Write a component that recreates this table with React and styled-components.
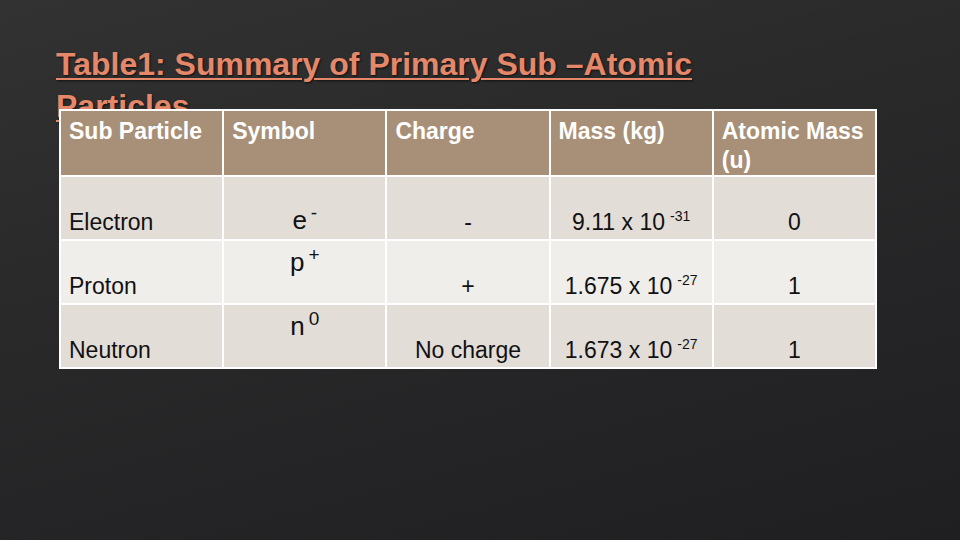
import React from "react";
import styled, { createGlobalStyle } from "styled-components";

const GlobalStyle = createGlobalStyle`
  html, body {
    margin: 0;
    padding: 0;
  }
  body {
    font-family: "Liberation Sans", Arial, sans-serif;
  }
`;

const Slide = styled.div`
  width: 960px;
  height: 540px;
  overflow: hidden;
  box-sizing: border-box;
  padding: 43px 0 0 56px;
  background-color: #262627;
  background-image: linear-gradient(
    165deg,
    #323232 0%,
    #2a2a2b 35%,
    #1f1f21 100%
  );
`;

const Title = styled.h1`
  margin: 0;
  width: 660px;
  font-size: 32px;
  line-height: 42px;
  font-weight: 700;
  color: #e5886a;
  text-decoration: underline;
  text-decoration-thickness: 2px;
  text-underline-offset: 3px;
  text-shadow: 1px 1px 2px rgba(0, 0, 0, 0.7);
`;

const Table = styled.table`
  position: relative;
  margin: -18px 0 0 3px;
  width: 818px;
  table-layout: fixed;
  border-collapse: collapse;
  border: 2px solid #ffffff;
  font-size: 23px;
  color: #111111;
`;

const HeadRow = styled.tr`
  height: 65px;
  background: #a88f78;
`;

const HeadCell = styled.th`
  border: 2px solid #ffffff;
  padding: 6px 8px 0 8px;
  text-align: left;
  vertical-align: top;
  font-weight: 700;
  line-height: 29px;
  color: #ffffff;
`;

const Row = styled.tr`
  height: 64px;
  background: ${(props) => (props.$light ? "#f0eeeb" : "#e3ddd8")};
`;

const Cell = styled.td`
  border: 2px solid #ffffff;
  padding: 0 8px 2px 8px;
  text-align: ${(props) => (props.$center ? "center" : "left")};
  vertical-align: bottom;
  line-height: 29px;
  white-space: nowrap;
`;

const SymbolCell = styled.td`
  border: 2px solid #ffffff;
  padding: ${(props) => (props.$top ? "6px 8px 0" : "0 8px 3px")};
  text-align: center;
  vertical-align: ${(props) => (props.$top ? "top" : "bottom")};
  font-size: 26px;
  line-height: 31px;
`;

const SymbolSup = styled.sup`
  font-size: 19px;
  line-height: 0;
  vertical-align: 10px;
  margin-left: 4px;
`;

const Exp = styled.sup`
  font-size: 14px;
  line-height: 0;
  vertical-align: 9px;
  margin-left: 5px;
`;

const particles = [
  { name: "Electron", sym: "e", sign: "-", charge: "-", mass: "9.11", exp: "-31", amu: "0" },
  { name: "Proton", sym: "p", sign: "+", charge: "+", mass: "1.675", exp: "-27", amu: "1" },
  { name: "Neutron", sym: "n", sign: "0", charge: "No charge", mass: "1.673", exp: "-27", amu: "1" },
];

const headers = ["Sub Particle", "Symbol", "Charge", "Mass (kg)", "Atomic Mass (u)"];

const App = () => {
  return (
    <>
      <GlobalStyle />
      <Slide>
        <Title>Table1: Summary of Primary Sub –Atomic Particles</Title>
        <Table>
          <thead>
            <HeadRow>
              {headers.map((h) => (
                <HeadCell key={h}>{h}</HeadCell>
              ))}
            </HeadRow>
          </thead>
          <tbody>
            {particles.map((p, i) => (
              <Row key={p.name} $light={i === 1}>
                <Cell>{p.name}</Cell>
                <SymbolCell $top={i > 0}>
                  {p.sym}
                  <SymbolSup>{p.sign}</SymbolSup>
                </SymbolCell>
                <Cell $center>{p.charge}</Cell>
                <Cell $center>
                  {p.mass} x 10<Exp>{p.exp}</Exp>
                </Cell>
                <Cell $center>{p.amu}</Cell>
              </Row>
            ))}
          </tbody>
        </Table>
      </Slide>
    </>
  );
};

export default App;
